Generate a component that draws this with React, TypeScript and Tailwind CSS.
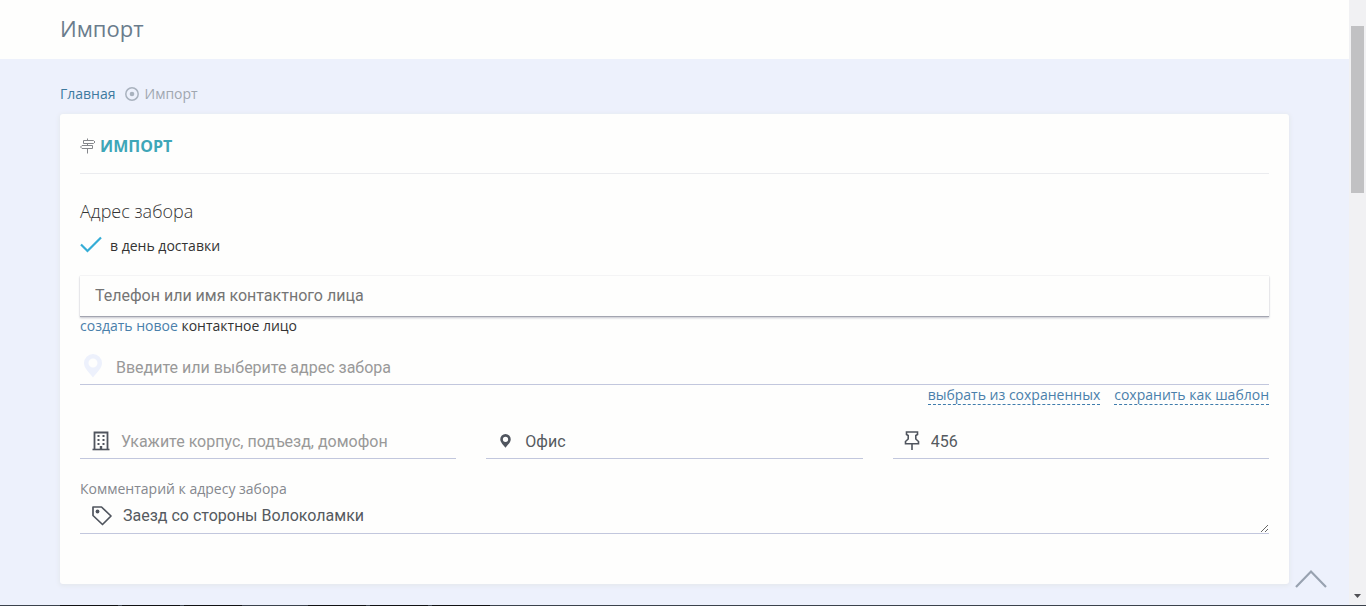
import React from "react";

function SignpostIcon() {
  return (
    <svg className="h-4 w-4 shrink-0" viewBox="0 0 16 16" fill="none" stroke="#85878b" strokeWidth="1" aria-hidden="true">
      <path d="M7.500 .5v1.500M3.500 2.500H13.500L15 4l-1.500 1.500H3.500ZM7.500 5.500v2M12.500 7.500H2L.5 9 2 10.500H12.500ZM7.500 10.500V15.500" />
    </svg>
  );
}

function TargetIcon() {
  return (
    <svg className="h-4 w-4" viewBox="0 0 16 16" aria-hidden="true">
      <circle cx="8" cy="8" r="6.200" fill="none" stroke="#a9b2be" strokeWidth="1.500" />
      <circle cx="8" cy="8" r="2.300" fill="#a9b2be" />
    </svg>
  );
}

function CheckIcon() {
  return (
    <svg className="h-5 w-[22px]" viewBox="0 0 22 20" fill="none" stroke="#35add6" strokeWidth="2.200" aria-hidden="true">
      <path d="M1 8.500 7.500 15 21 1.500" />
    </svg>
  );
}

function PinIcon({ className }: { className: string }) {
  return (
    <svg className={className} viewBox="0 0 18 24" fill="currentColor" aria-hidden="true">
      <path fillRule="evenodd" d="M9 0a9 9 0 0 0-9 9c0 5.600 5.500 9.700 9 14.500C12.500 18.700 18 14.600 18 9a9 9 0 0 0-9-9Zm0 4.500a4.500 4.500 0 1 1 0 9 4.500 4.500 0 0 1 0-9Z" />
    </svg>
  );
}

function BuildingIcon() {
  return (
    <svg className="h-5 w-[18px]" viewBox="0 0 18 20" fill="none" stroke="#50555e" aria-hidden="true">
      <path d="M2.500 18V1.500h13V18" strokeWidth="1.800" />
      <path d="M.5 18.500h17" strokeWidth="1.600" />
      <path d="M5.500 5h2M10.500 5h2M5.500 9h2M10.500 9h2M5.500 13h2M10.500 13h2" strokeWidth="2" />
      <path d="M9 15v3" strokeWidth="2.400" />
    </svg>
  );
}

function PushpinIcon() {
  return (
    <svg className="h-5 w-4" viewBox="0 0 16 20" fill="none" stroke="#50555e" strokeWidth="1.600" aria-hidden="true">
      <path d="M2.500 1h11v2.500l-1.700 1v3.500l2.700 2.500v2.300H1.500V10.500l2.700-2.500V4.500L2.500 3.500ZM8 12.800V19" />
    </svg>
  );
}

function TagIcon() {
  return (
    <svg className="h-5 w-5" viewBox="0 0 20 20" fill="none" stroke="#50555e" strokeWidth="1.700" strokeLinejoin="round" aria-hidden="true">
      <path d="M1 1h8.500L19 10 10.500 18.500 1 9.500Z" />
      <circle cx="5.500" cy="5.500" r="1.900" fill="#50555e" stroke="none" />
    </svg>
  );
}

const field = "flex h-[35px] items-center border-b border-[#c2c7dd]";
const control = "h-full min-w-0 flex-1 bg-transparent font-['Roboto',sans-serif] text-base text-[#555a60] outline-none placeholder:text-[#999]";
const dashed = "inline-block border-b border-dashed border-[#3f7cac] leading-[19px] text-[#4a80ab]";

function Scrollbar() {
  return (
    <div className="flex w-[17px] shrink-0 flex-col justify-between bg-[#f1f1f3] px-0.5 pt-[26px] pb-[7px]" aria-hidden="true">
      <div className="h-[167px] bg-[#c1c1c3]" />
      <svg className="h-1 w-[7px] self-center" viewBox="0 0 7 4" fill="#505054">
        <path d="M0 0h7L3.500 4Z" />
      </svg>
    </div>
  );
}

export default function App() {
  return (
    <div className="flex h-screen flex-col overflow-hidden bg-[#edf1fc] font-['Open_Sans',sans-serif] text-sm text-[#333]">
      <div className="flex min-h-0 flex-1">
        <div className="relative min-w-0 flex-1 overflow-hidden">
          <header className="bg-[#fefefd] px-[60px] pt-[10px] pb-[13px]">
            <h1 className="text-[22px] leading-9 text-[#6a7c8c]">Импорт</h1>
          </header>
          <main className="px-[60px] pt-[25px]">
            <nav className="flex items-center leading-5" aria-label="Навигация">
              <a href="#home" className="text-[#3d7a9f]">Главная</a>
              <span className="mr-[5px] ml-2"><TargetIcon /></span>
              <span className="text-[#a0a7b0]">Импорт</span>
            </nav>
            <section className="mt-[10px] rounded-[3px] bg-[#fefefd] px-5 pt-5 pb-[50px] shadow-[0_1px_4px_1px_#e4e8ee]">
              <div className="flex items-center gap-1 border-b border-[#ebecef] pb-[15px]">
                <SignpostIcon />
                <h2 className="text-base font-bold text-[#3ea6b8]">ИМПОРТ</h2>
              </div>
              <form>
                <h3 className="mt-[25px] text-lg leading-6 font-light">Адрес забора</h3>
                <label className="relative mt-[13px] flex w-fit cursor-pointer items-center gap-2 leading-5">
                  <input type="checkbox" defaultChecked className="peer absolute h-5 w-5 opacity-0" />
                  <span className="opacity-0 peer-checked:opacity-100"><CheckIcon /></span>
                  в день доставки
                </label>
                <input
                  type="text"
                  aria-label="Контактное лицо"
                  placeholder="Телефон или имя контактного лица"
                  className="mt-5 block h-[41px] w-full border-b border-[#a3a5b0] px-[15px] pb-0.5 font-['Roboto',sans-serif] text-base shadow-[0_0_1px_#d5d7dc,0_1px_2px_#c3c5cc] outline-none placeholder:text-[#757575]"
                />
                <p className="leading-[18px]">
                  <a href="#new-contact" className="text-[#4a80ab]">создать новое</a> контактное лицо
                </p>
                <label className={`${field} mt-[15px]`}>
                  <span className="mr-[14px] ml-1 pb-[3px] text-[#edf1fc]"><PinIcon className="h-6 w-[18px]" /></span>
                  <input type="text" aria-label="Адрес забора" placeholder="Введите или выберите адрес забора" className={control} />
                </label>
                <div className="flex justify-end gap-[14px]">
                  <a href="#saved" className={dashed}>выбрать из сохраненных</a>
                  <a href="#save" className={dashed}>сохранить как шаблон</a>
                </div>
                <div className="mt-[19px] grid grid-cols-3 gap-[30px]">
                  <label className={field}>
                    <span className="mr-[11px] ml-3"><BuildingIcon /></span>
                    <input type="text" aria-label="Корпус, подъезд, домофон" placeholder="Укажите корпус, подъезд, домофон" className={control} />
                  </label>
                  <label className={field}>
                    <span className="mr-[14px] ml-[14px] text-[#50555e]"><PinIcon className="h-[14px] w-[11px]" /></span>
                    <input type="text" aria-label="Тип помещения" defaultValue="Офис" className={control} />
                  </label>
                  <label className={field}>
                    <span className="mr-[11px] ml-[11px]"><PushpinIcon /></span>
                    <input type="text" aria-label="Номер" defaultValue="456" className={control} />
                  </label>
                </div>
                <label htmlFor="comment" className="mt-5 block leading-5 text-[#85888e]">Комментарий к адресу забора</label>
                <div className="flex items-center border-b border-[#c2c7dd]">
                  <span className="mr-[11px] ml-3"><TagIcon /></span>
                  <textarea
                    id="comment"
                    rows={1}
                    defaultValue="Заезд со стороны Волоколамки"
                    className="block h-[34px] min-w-0 flex-1 resize-y overflow-hidden bg-transparent pt-[5px] font-['Roboto',sans-serif] text-base text-[#555a60] outline-none"
                  />
                </div>
              </form>
            </section>
          </main>
          <button type="button" aria-label="Наверх" className="absolute right-[21px] bottom-4">
            <svg className="h-5 w-[34px]" viewBox="0 0 34 20" fill="none" stroke="#98a2b0" strokeWidth="2.200" aria-hidden="true">
              <path d="M2 18 17 2.500 32 18" />
            </svg>
          </button>
        </div>
        <Scrollbar />
      </div>
      <footer className="flex h-px shrink-0 bg-[#3b424c] pl-[60px]">
        <div className="flex gap-1">
          <div className="h-px w-[58px] bg-[#111214]" />
          <div className="h-px w-[58px] bg-[#111214]" />
          <div className="h-px w-[58px] bg-[#111214]" />
        </div>
        <div className="ml-[66px] flex gap-1">
          <div className="h-px w-[58px] bg-[#111214]" />
          <div className="h-px w-[58px] bg-[#111214]" />
          <div className="h-px w-[58px] bg-[#111214]" />
        </div>
      </footer>
    </div>
  );
}
